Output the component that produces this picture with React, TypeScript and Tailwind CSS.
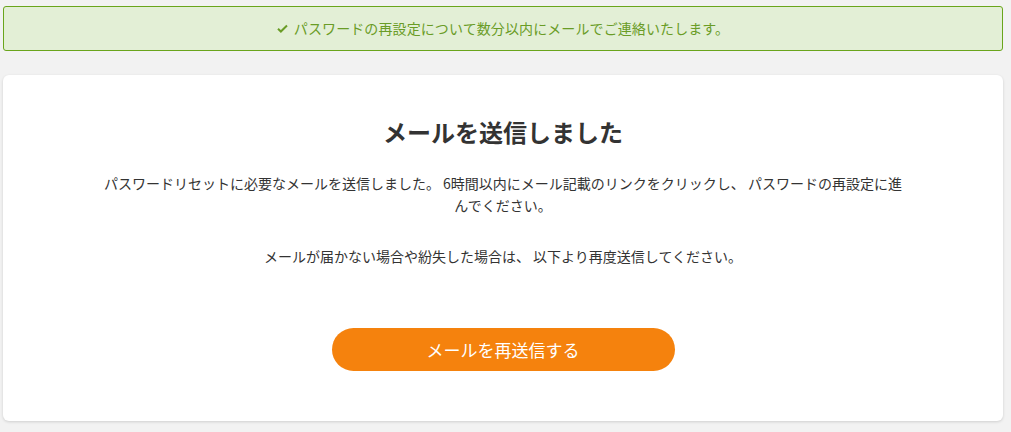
import React from 'react'

const CheckIcon = () => (
    <svg width="11" height="9" viewBox="0 0 12 10" fill="none" xmlns="http://www.w3.org/2000/svg">
        <path d="M1 5.2L4.2 8.4L11 1.6" stroke="#6a9c26" strokeWidth="2.2" />
    </svg>
)

const App = () => {
    return (
        <div
            className="min-h-[432px] bg-[#f2f2f2] px-[3px] pt-[6px] pb-[10px] text-[#333]"
            style={{ fontFamily: '"Noto Sans CJK JP", "Noto Sans", sans-serif' }}
        >
            {/* flash message */}
            <div className="w-[1000px] h-[45px] flex items-center justify-center gap-[6px] border border-[#6aa51c] rounded-[3px] bg-[#e3efd6] text-[#6a9c26] text-[14px]">
                <CheckIcon />
                <span className="tracking-[0.1px]">パスワードの再設定について数分以内にメールでご連絡いたします。</span>
            </div>

            {/* card */}
            <div className="w-[1000px] mt-[24px] bg-white rounded-[6px] shadow-[0_1px_3px_rgba(0,0,0,0.15)] pt-[42px] pb-[50px] flex flex-col items-center">
                <h1 className="text-[24px] leading-[30px] font-bold text-[#333]">メールを送信しました</h1>
                <p className="mt-[25px] max-w-[810px] text-center text-[14px] leading-[22px]">
                    パスワードリセットに必要なメールを送信しました。 6時間以内にメール記載のリンクをクリックし、 パスワードの再設定に進んでください。
                </p>
                <p className="mt-[29px] text-center text-[14px] leading-[22px]">
                    メールが届かない場合や紛失した場合は、 以下より再度送信してください。
                </p>
                <button className="mt-[61px] w-[343px] h-[43px] rounded-full bg-[#f5820d] text-white text-[17px]">
                    メールを再送信する
                </button>
            </div>
        </div>
    )
}

export default App
